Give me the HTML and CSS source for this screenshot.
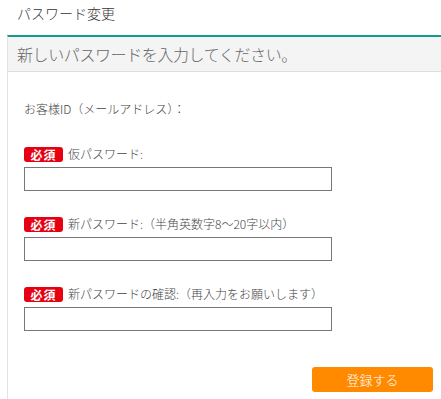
FILE: index.html
```html
<!DOCTYPE html>
<html lang="ja">
<head>
<meta charset="utf-8">
<link rel="stylesheet" href="styles.css">
</head>
<body>
<div class="page-title">パスワード変更</div>
<div class="panel">
  <div class="panel-head">新しいパスワードを入力してください。</div>
  <div class="panel-body">
    <div class="id-line">お客様ID（メールアドレス）：</div>
    <div class="field">
      <div class="label-row"><span class="req">必須</span><span class="label">仮パスワード:</span></div>
      <input class="text-input" type="password">
    </div>
    <div class="field">
      <div class="label-row"><span class="req">必須</span><span class="label">新パスワード:（半角英数字8〜20字以内）</span></div>
      <input class="text-input" type="password">
    </div>
    <div class="field">
      <div class="label-row"><span class="req">必須</span><span class="label">新パスワードの確認:（再入力をお願いします）</span></div>
      <input class="text-input" type="password">
    </div>
    <div class="actions">
      <button class="submit" type="button">登録する</button>
    </div>
  </div>
</div>
</body>
</html>
```
FILE: styles.css
```css
html, body {
  margin: 0;
  padding: 0;
  background: #fff;
}
body {
  font-family: "Noto Sans CJK JP", "Noto Sans", sans-serif;
  font-weight: 300;
  color: #444;
  width: 441px;
  height: 399px;
  overflow: hidden;
  display: flex;
  flex-direction: column;
}
.page-title {
  height: 35px;
  flex: none;
  box-sizing: border-box;
  padding: 4px 0 0 17px;
  font-size: 14px;
  line-height: 18px;
  color: #333;
}
.panel {
  flex: 1;
  min-height: 0;
  margin-left: 7px;
  border-top: 2px solid #119c8d;
  border-left: 1px solid #e3e3e3;
}
.panel-head {
  height: 34px;
  line-height: 34px;
  background: #f4f4f4;
  border-bottom: 1px solid #dedede;
  padding-left: 9px;
  font-size: 16px;
  letter-spacing: -0.4px;
  color: #666;
}
.panel-body {
  padding: 28px 8px 0 16px;
}
.id-line {
  font-size: 12px;
  line-height: 18px;
  color: #444;
}
.field {
  margin-top: 27px;
}
.field + .field {
  margin-top: 24px;
}
.label-row {
  display: flex;
  align-items: center;
  height: 18px;
  font-size: 12px;
  line-height: 18px;
}
.req {
  display: inline-block;
  width: 39px;
  height: 15px;
  line-height: 15px;
  background: #e60012;
  color: #fff;
  border-radius: 3px;
  font-size: 12px;
  font-weight: bold;
  text-align: center;
  letter-spacing: 1px;
  margin-right: 5px;
}
.label {
  color: #444;
}
.text-input {
  display: block;
  margin: 4px 0 0 0;
  width: 308px;
  height: 24px;
  box-sizing: border-box;
  border: 1px solid #777;
  border-radius: 0;
  padding: 0 4px;
  background: #fff;
}
.actions {
  display: flex;
  justify-content: flex-end;
  margin-top: 36px;
}
.submit {
  width: 121px;
  height: 25px;
  border: none;
  border-radius: 3px;
  background: #ff8a00;
  color: #fff;
  font-family: "Noto Sans CJK JP", "Noto Sans", sans-serif;
  font-weight: 300;
  font-size: 13px;
  padding: 0;
}
```
